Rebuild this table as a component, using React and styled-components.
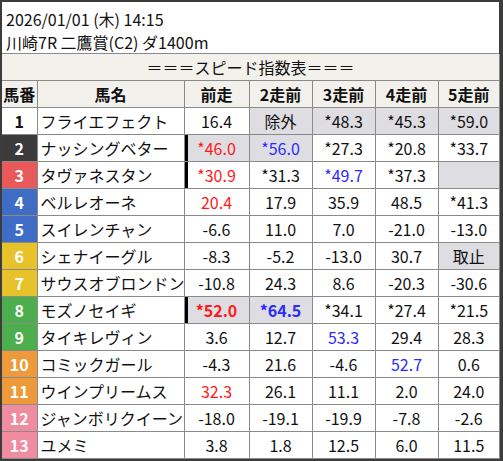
import styled, { createGlobalStyle } from 'styled-components';

const GlobalStyle = createGlobalStyle`
  html, body {
    margin: 0;
    padding: 0;
    background: #3c3c3c;
  }
  body {
    font-family: "Noto Sans CJK JP", "Noto Sans", sans-serif;
    color: #111;
  }
`

// waku colors for horse numbers
const WAKU = {
  1: { bg: '#ffffff', fg: '#111' },
  2: { bg: '#3b3b3b', fg: '#fff' },
  3: { bg: '#e85a5a', fg: '#fff' },
  4: { bg: '#3f6cc4', fg: '#fff' },
  5: { bg: '#3f6cc4', fg: '#fff' },
  6: { bg: '#e8c22a', fg: '#fff' },
  7: { bg: '#e8c22a', fg: '#fff' },
  8: { bg: '#4cae4c', fg: '#fff' },
  9: { bg: '#4cae4c', fg: '#fff' },
  10: { bg: '#ee9a3a', fg: '#fff' },
  11: { bg: '#ee9a3a', fg: '#fff' },
  12: { bg: '#f08ca0', fg: '#fff' },
  13: { bg: '#f08ca0', fg: '#fff' },
};

const rows = [
  [1, 'フライエフェクト', ['16.4'], ['除外', 'n', 'g'], ['*48.3', 'n', 'g'], ['*45.3', 'n', 'g'], ['*59.0', 'n', 'g']],
  [2, 'ナッシングベター', ['*46.0', 'r', 'g', 'bar'], ['*56.0', 'b', 'g'], ['*27.3'], ['*20.8'], ['*33.7']],
  [3, 'タヴァネスタン', ['*30.9', 'r', '', 'bar'], ['*31.3'], ['*49.7', 'b'], ['*37.3'], ['', 'n', 'g']],
  [4, 'ベルレオーネ', ['20.4', 'r'], ['17.9'], ['35.9'], ['48.5'], ['*41.3']],
  [5, 'スイレンチャン', ['-6.6'], ['11.0'], ['7.0'], ['-21.0'], ['-13.0']],
  [6, 'シェナイーグル', ['-8.3'], ['-5.2'], ['-13.0'], ['30.7'], ['取止', 'n', 'g']],
  [7, 'サウスオブロンドン', ['-10.8'], ['24.3'], ['8.6'], ['-20.3'], ['-30.6']],
  [8, 'モズノセイギ', ['*52.0', 'R', 'g', 'bar'], ['*64.5', 'B', 'g'], ['*34.1'], ['*27.4'], ['*21.5']],
  [9, 'タイキレヴィン', ['3.6'], ['12.7'], ['53.3', 'b'], ['29.4'], ['28.3']],
  [10, 'コミックガール', ['-4.3'], ['21.6'], ['-4.6'], ['52.7', 'b'], ['0.6']],
  [11, 'ウインプリームス', ['32.3', 'r'], ['26.1'], ['11.1'], ['2.0'], ['24.0']],
  [12, 'ジャンボリクイーン', ['-18.0'], ['-19.1'], ['-19.9'], ['-7.8'], ['-2.6']],
  [13, 'ユメミ', ['3.8'], ['1.8'], ['12.5'], ['6.0'], ['11.5']],
];

const App = () => {
  return (
    <Frame>
      <GlobalStyle />
      <Info>
        <InfoLine>2026/01/01 (木) 14:15</InfoLine>
        <InfoLine>川崎7R 二鷹賞(C2) ダ1400m</InfoLine>
      </Info>
      <Table>
        <colgroup>
          <col style={{ width: 35 }} />
          <col style={{ width: 147 }} />
          <col style={{ width: 65 }} />
          <col style={{ width: 63 }} />
          <col style={{ width: 63 }} />
          <col style={{ width: 63 }} />
          <col />
        </colgroup>
        <thead>
          <tr>
            <TitleCell colSpan={7}>＝＝＝スピード指数表＝＝＝</TitleCell>
          </tr>
          <tr>
            <HeadCell>馬番</HeadCell>
            <HeadCell>馬名</HeadCell>
            <HeadCell>前走</HeadCell>
            <HeadCell>2走前</HeadCell>
            <HeadCell>3走前</HeadCell>
            <HeadCell>4走前</HeadCell>
            <HeadCell>5走前</HeadCell>
          </tr>
        </thead>
        <tbody>
          {rows.map(([num, name, ...scores]) => (
            <tr key={num}>
              <NumCell $bg={WAKU[num].bg} $fg={WAKU[num].fg}>{num}</NumCell>
              <NameCell>{name}</NameCell>
              {scores.map(([text, color, bg, bar], i) => (
                <ScoreCell
                  key={i}
                  $color={color}
                  $gray={bg === 'g'}
                  $bar={bar === 'bar'}
                >
                  {text}
                </ScoreCell>
              ))}
            </tr>
          ))}
        </tbody>
      </Table>
    </Frame>
  );
}

const Frame = styled.div`
  width: 497px;
  margin: 2px 0 0 2px;
  background: #fff;
`
const Info = styled.div`
  height: 52px;
  padding: 6px 0 0 4px;
  box-sizing: border-box;
  border-bottom: 1px solid #8a8a8a;
`
const InfoLine = styled.div`
  font-size: 16px;
  line-height: 23px;
  white-space: nowrap;
`
const Table = styled.table`
  width: 498px;
  border-collapse: collapse;
  table-layout: fixed;
  font-size: 16px;
  td, th {
    border: 1px solid #8a8a8a;
    height: 26px;
    padding: 0;
    line-height: 24px;
    white-space: nowrap;
    overflow: hidden;
  }
  tr:first-child th {
    border-top: none;
  }
  tr th:first-child, tr td:first-child {
    border-left: none;
  }
`
const TitleCell = styled.th`
  background: #f2f1ec;
  font-weight: normal;
  text-align: center;
`
const HeadCell = styled.th`
  background: #f2f1ec;
  font-weight: bold;
  text-align: center;
`
const NumCell = styled.td`
  background: ${p => p.$bg};
  color: ${p => p.$fg};
  font-weight: bold;
  text-align: center;
`
const NameCell = styled.td`
  text-align: left;
  padding-left: 3px !important;
  letter-spacing: 0;
`
const SCORE_COLORS = { r: '#ff1a1a', R: '#ff1a1a', b: '#2b2bff', B: '#2b2bff', n: '#111' };
const ScoreCell = styled.td`
  text-align: center;
  color: ${p => SCORE_COLORS[p.$color] || '#111'};
  font-weight: ${p => (p.$color === 'R' || p.$color === 'B') ? 'bold' : 'normal'};
  background: ${p => p.$gray ? '#dddde2' : '#fff'};
  box-shadow: ${p => p.$bar ? 'inset 3px 0 0 #000' : 'none'};
`

export default App;
